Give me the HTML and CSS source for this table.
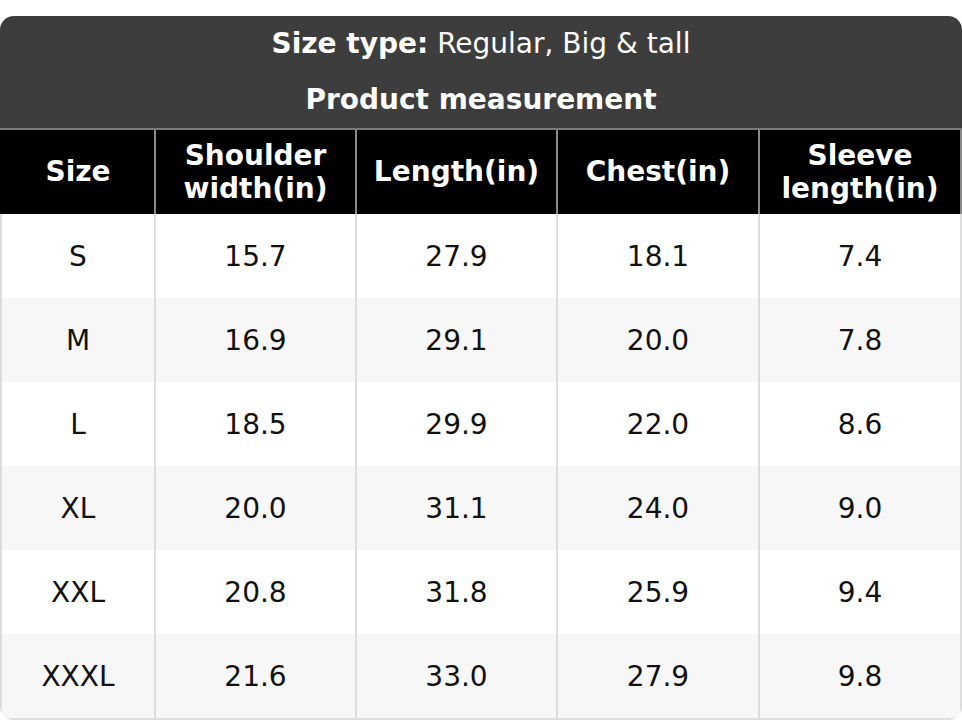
FILE: index.html
```html
<!DOCTYPE html>
<html lang="en">
<head>
<meta charset="utf-8">
<title>Size chart</title>
<link rel="stylesheet" href="styles.css">
</head>
<body>
<div class="chart">
  <div class="chart-head">
    <p class="head-line"><strong>Size type:</strong> Regular, Big &amp; tall</p>
    <p class="head-line"><strong>Product measurement</strong></p>
  </div>
  <table class="sizes">
    <colgroup>
      <col class="c1"><col class="c2"><col class="c3"><col class="c4"><col class="c5">
    </colgroup>
    <thead>
      <tr>
        <th>Size</th>
        <th>Shoulder<br>width(in)</th>
        <th>Length(in)</th>
        <th>Chest(in)</th>
        <th>Sleeve<br>length(in)</th>
      </tr>
    </thead>
    <tbody>
      <tr><td>S</td><td>15.7</td><td>27.9</td><td>18.1</td><td>7.4</td></tr>
      <tr><td>M</td><td>16.9</td><td>29.1</td><td>20.0</td><td>7.8</td></tr>
      <tr><td>L</td><td>18.5</td><td>29.9</td><td>22.0</td><td>8.6</td></tr>
      <tr><td>XL</td><td>20.0</td><td>31.1</td><td>24.0</td><td>9.0</td></tr>
      <tr><td>XXL</td><td>20.8</td><td>31.8</td><td>25.9</td><td>9.4</td></tr>
      <tr><td>XXXL</td><td>21.6</td><td>33.0</td><td>27.9</td><td>9.8</td></tr>
    </tbody>
  </table>
</div>
</body>
</html>
```
FILE: styles.css
```css
html, body {
  margin: 0;
  padding: 0;
  background: #ffffff;
}

body {
  font-family: "DejaVu Sans", "Liberation Sans", sans-serif;
  font-size: 28px;
  color: #111111;
}

.chart {
  margin-top: 16px;
  width: 962px;
  border-radius: 14px;
  overflow: hidden;
}

.chart-head {
  background: #3d3d3d;
  color: #ffffff;
  border-bottom: 2px solid #7a7a7a;
}

.head-line {
  margin: 0;
  height: 56px;
  line-height: 55px;
  text-align: center;
}

.head-line strong {
  font-weight: bold;
}

.sizes {
  width: 962px;
  table-layout: fixed;
  border-collapse: separate;
  border-spacing: 0;
}

.sizes col.c1 { width: 154px; }
.sizes col.c2 { width: 201px; }
.sizes col.c3 { width: 201px; }
.sizes col.c4 { width: 202px; }
.sizes col.c5 { width: 204px; }

.sizes th,
.sizes td {
  box-sizing: border-box;
  padding: 0;
  text-align: center;
  vertical-align: middle;
  border-left: 2px solid #dddddd;
}

.sizes th {
  background: #000000;
  color: #ffffff;
  font-weight: bold;
  height: 84px;
  padding-bottom: 1px;
  border-left-color: #8a8a8a;
}

.sizes th:first-child {
  border-left-color: #000000;
}

.sizes th:last-child {
  border-right: 2px solid #8a8a8a;
}

.sizes td {
  height: 84px;
  font-weight: normal;
}

.sizes td:last-child {
  border-right: 2px solid #dddddd;
}

.sizes tbody tr:nth-child(even) td {
  background: #f7f7f7;
}

.sizes tbody tr:last-child td {
  border-bottom: 2px solid #dddddd;
  height: 86px;
}
```
